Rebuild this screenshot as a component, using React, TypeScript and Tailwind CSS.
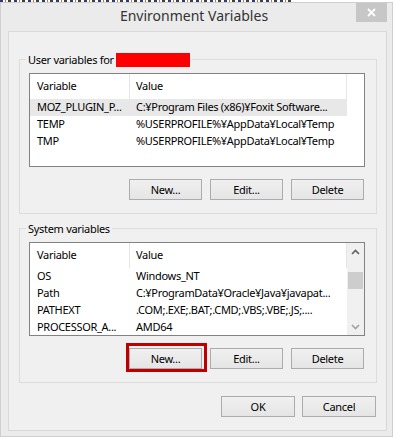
import React from "react";

type Row = { name: string; value: string; selected?: boolean };

const userRows: Row[] = [
  { name: "MOZ_PLUGIN_P...", value: "C:¥Program Files (x86)¥Foxit Software...", selected: true },
  { name: "TEMP", value: "%USERPROFILE%¥AppData¥Local¥Temp" },
  { name: "TMP", value: "%USERPROFILE%¥AppData¥Local¥Temp" },
];

const systemRows: Row[] = [
  { name: "OS", value: "Windows_NT" },
  { name: "Path", value: "C:¥ProgramData¥Oracle¥Java¥javapat..." },
  { name: "PATHEXT", value: ".COM;.EXE;.BAT;.CMD;.VBS;.VBE;.JS;...." },
  { name: "PROCESSOR_A...", value: "AMD64" },
];

function Btn({ label, w = "w-[73px]" }: { label: string; w?: string }) {
  return (
    <button
      className={`${w} h-[21px] border border-[#acacac] bg-linear-to-b from-[#f0f0f0] to-[#e5e5e5] text-[11px] leading-none text-black`}
    >
      {label}
    </button>
  );
}

function ListView({ rows, scroll }: { rows: Row[]; scroll?: boolean }) {
  return (
    <div className="flex h-[94px] w-[336px] border border-[#828282] bg-white">
      <div className="flex w-[317px] flex-col">
        {/* header */}
        <div className="flex h-[25px] shrink-0">
          <div className="flex w-[100px] items-center border-r border-[#e5e5e5] pl-[7px]">Variable</div>
          <div className="flex w-[217px] items-center border-r border-[#e5e5e5] pl-[6px]">Value</div>
        </div>
        {rows.map((r) => (
          <div
            key={r.name}
            className={`flex h-[17px] shrink-0 items-center ${r.selected ? "bg-[#e8e8e8]" : ""}`}
          >
            <div className="w-[100px] whitespace-nowrap pl-[7px]">{r.name}</div>
            <div className="w-[217px] whitespace-nowrap pl-[6px]">{r.value}</div>
          </div>
        ))}
      </div>
      {scroll ? (
        <div className="flex w-[17px] flex-col items-center bg-[#f0f0f0]">
          <div className="flex h-[17px] w-full items-center justify-center">
            <svg width="9" height="6" viewBox="0 0 9 6">
              <path d="M1 5 L4.5 1.5 L8 5" fill="none" stroke="#606060" strokeWidth="1.6" />
            </svg>
          </div>
          <div className="mt-[12px] h-[17px] w-[15px] bg-[#cdcdcd]" />
          <div className="flex-1" />
          <div className="flex h-[17px] w-full items-center justify-center">
            <svg width="9" height="6" viewBox="0 0 9 6">
              <path d="M1 1 L4.5 4.5 L8 1" fill="none" stroke="#a0a0a0" strokeWidth="1.6" />
            </svg>
          </div>
        </div>
      ) : (
        <div className="w-[17px]" />
      )}
    </div>
  );
}

export default function App() {
  return (
    <div
      className="h-[438px] w-[395px] overflow-hidden bg-white text-[11px] tracking-[-0.3px] text-black"
      style={{ fontFamily: '"Noto Sans", "Noto Sans CJK JP", sans-serif' }}
    >
      {/* strip of the window behind */}
      <div className="h-[2px] w-[292px] bg-[repeating-linear-gradient(90deg,#2e3c6e_0px,#2e3c6e_3px,#ffffff_3px,#ffffff_5px,#b87838_5px,#b87838_6px,#ffffff_6px,#ffffff_8px,#404040_8px,#404040_11px,#ffffff_11px,#ffffff_14px)]" />

      {/* window */}
      <div className="flex h-[435px] w-[393px] flex-col border border-[#cfcfcf] bg-[#ebebeb]">
        {/* title bar */}
        <div className="flex h-[28px] shrink-0">
          <div className="flex-1" />
          <div className="pt-[3px] text-[14px] leading-[20px] tracking-normal text-[#333333]">Environment Variables</div>
          <div className="flex flex-1 justify-end pr-[5px]">
            <div className="flex h-[19px] w-[31px] items-center justify-center bg-[#c7c7c7]">
              <svg width="9" height="9" viewBox="0 0 9 9">
                <path d="M1 1 L8 8 M8 1 L1 8" stroke="#ffffff" strokeWidth="1.8" />
              </svg>
            </div>
          </div>
        </div>

        {/* client area */}
        <div className="ml-[7px] flex h-[400px] w-[379px] flex-col border border-[#d8d8d8] bg-[#f0f0f0]">
          <fieldset className="mt-[20px] ml-[10px] w-[358px] border border-[#dcdcdc] pb-[13px] pl-[9px]">
            <legend className="ml-[-3px] px-[2px] leading-[15px]">
              User variables for <span className="inline-block h-[14px] w-[74px] bg-[#ff0000] align-[-3px]" />
            </legend>
            <div className="mt-[6px]">
              <ListView rows={userRows} />
            </div>
            <div className="mt-[12px] flex w-[335px] justify-end gap-[8px]">
              <Btn label="New..." />
              <Btn label="Edit..." />
              <Btn label="Delete" />
            </div>
          </fieldset>

          <fieldset className="mt-[7px] ml-[10px] w-[358px] border border-[#dcdcdc] pb-[13px] pl-[9px]">
            <legend className="ml-[-3px] px-[2px] leading-[15px]">System variables</legend>
            <div className="mt-[6px]">
              <ListView rows={systemRows} scroll />
            </div>
            <div className="mt-[12px] flex w-[335px] justify-end gap-[8px]">
              <div className="relative flex">
                <Btn label="New..." />
                <div className="absolute -top-[5px] -right-[5px] -bottom-[3px] -left-[3px] border-[3px] border-[#c00000]" />
              </div>
              <Btn label="Edit..." />
              <Btn label="Delete" />
            </div>
          </fieldset>

          <div className="mt-[13px] flex justify-end gap-[7px] pr-[10px]">
            <Btn label="OK" w="w-[74px]" />
            <Btn label="Cancel" w="w-[74px]" />
          </div>
        </div>
      </div>
    </div>
  );
}
